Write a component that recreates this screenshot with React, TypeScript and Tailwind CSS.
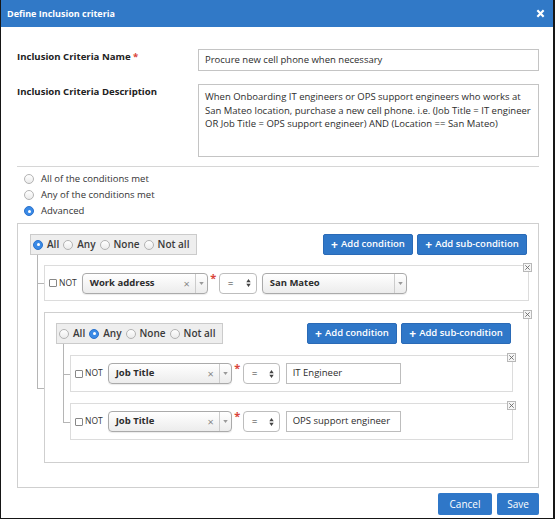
import React from 'react';

const Radio: React.FC<{ checked?: boolean }> = ({ checked }) =>
    checked ? (
        <span className="flex h-[10px] w-[10px] shrink-0 items-center justify-center rounded-full border border-[#2b72cc] bg-[#3a8ae6]">
            <span className="h-[3px] w-[3px] rounded-full bg-white" />
        </span>
    ) : (
        <span className="h-[10px] w-[10px] shrink-0 rounded-full border border-[#b3b3b3] bg-gradient-to-b from-white to-[#ebebeb]" />
    );

const CloseBox: React.FC = () => (
    <span className="absolute -right-[4px] -top-[3px] flex h-[9px] w-[9px] items-center justify-center border border-[#b8b8b8] bg-[#f6f6f6]">
        <svg viewBox="0 0 8 8" className="h-[7px] w-[7px]">
            <path d="M1.5 1.5l5 5M6.5 1.5l-5 5" stroke="#666" strokeWidth="1" />
        </svg>
    </span>
);

const Caret: React.FC = () => (
    <svg viewBox="0 0 6 4" className="h-[3px] w-[5px]">
        <path d="M0 0h6L3 4z" fill="#999" />
    </svg>
);

const ChosenSelect: React.FC<{ label: string; clear?: boolean; className: string }> = ({ label, clear, className }) => (
    <div className={`flex h-[21px] shrink-0 items-center rounded-[4px] border border-[#aaa] bg-gradient-to-b from-white to-[#ececec] shadow-[0_1px_1px_rgba(0,0,0,0.08)] ${className}`}>
        <span className="flex-1 truncate pl-[7px] text-[9.5px] font-bold text-[#2d2d2d]">{label}</span>
        {clear && <span className="mr-[5px] text-[11px] leading-none text-[#888]">×</span>}
        <span className="flex h-full w-[12px] items-center justify-center border-l border-[#ccc]">
            <Caret />
        </span>
    </div>
);

const EqSelect: React.FC<{ className: string }> = ({ className }) => (
    <div className={`flex h-[21px] shrink-0 items-center justify-between rounded-[4px] border border-[#bdbdbd] bg-white pl-[8px] pr-[5px] ${className}`}>
        <span className="text-[10px] text-[#333]">=</span>
        <svg viewBox="0 0 5 9" className="h-[8px] w-[5px]">
            <path d="M0 3.6h5L2.5 0zM0 5.4h5L2.5 9z" fill="#444" />
        </svg>
    </div>
);

const Asterisk: React.FC = () => (
    <span className="flex w-[11px] shrink-0 justify-center self-start pt-[6px] text-[11px] font-bold leading-none text-[#d9443a]">*</span>
);

const NotBox: React.FC = () => (
    <div className="flex shrink-0 items-center">
        <span className="h-[8px] w-[8px] rounded-[1px] border border-[#888] bg-white" />
        <span className="ml-[2px] text-[8.5px] text-[#333]">NOT</span>
    </div>
);

interface RuleRowProps {
    field: string;
    value: React.ReactNode;
    selectWidth: string;
    eqWidth: string;
    height: string;
}

const RuleRow: React.FC<RuleRowProps> = ({ field, value, selectWidth, eqWidth, height }) => (
    <div className={`relative flex items-center border border-[#dcdcdc] bg-white pl-[4px] ${height}`}>
        <CloseBox />
        <NotBox />
        <ChosenSelect label={field} clear className={`ml-[5px] ${selectWidth}`} />
        <Asterisk />
        <EqSelect className={eqWidth} />
        {value}
    </div>
);

const AddButton: React.FC<{ label: string; className: string }> = ({ label, className }) => (
    <button className={`flex h-[21px] items-center justify-center gap-[3px] rounded-[2px] border border-[#2a6ab6] bg-[#2f77c8] text-[9.5px] font-semibold text-white ${className}`}>
        <span className="text-[12px] font-bold leading-none">+</span>
        {label}
    </button>
);

const GroupHeader: React.FC<{ active: string }> = ({ active }) => (
    <div className="flex items-start justify-between">
        <div className="flex h-[21px] w-[167px] items-center gap-[4px] border border-[#cbcbcb] bg-[#eeeeee] pl-[2px] text-[10px] font-semibold text-[#3a3a3a]">
            {['All', 'Any', 'None', 'Not all'].map((opt) => (
                <React.Fragment key={opt}>
                    <Radio checked={opt === active} />
                    <span>{opt}</span>
                </React.Fragment>
            ))}
        </div>
        <div className="mr-[2px] flex gap-[4px]">
            <AddButton label="Add condition" className="w-[90px]" />
            <AddButton label="Add sub-condition" className="w-[110px]" />
        </div>
    </div>
);

// tree connector lines, one set per child
const TreeItem: React.FC<{ gap: 10 | 11; last?: boolean; children: React.ReactNode }> = ({ gap, last, children }) => {
    const wrap = gap === 10 ? 'relative mt-[10px]' : 'relative mt-[11px]';
    const vert =
        gap === 10
            ? last
                ? '-top-[10px] h-[calc(50%+10px)]'
                : '-top-[10px] h-[calc(100%+10px)]'
            : last
              ? '-top-[11px] h-[calc(50%+11px)]'
              : '-top-[11px] h-[calc(100%+11px)]';
    return (
        <div className={wrap}>
            <span className={`absolute -left-[7px] border-l border-[#b5b5b5] ${vert}`} />
            <span className="absolute -left-[7px] top-1/2 w-[7px] border-t border-[#b5b5b5]" />
            {children}
        </div>
    );
};

const TextValue: React.FC<{ text: string }> = ({ text }) => (
    <div className="ml-[6px] flex h-[21px] w-[115px] items-center border border-[#bdbdbd] bg-white pl-[6px] text-[9.5px] text-[#2d2d2d]">
        {text}
    </div>
);

const App: React.FC = () => {
    return (
        <div className="flex h-[519px] w-[555px] flex-col overflow-hidden border-b border-l border-r-2 border-[#161616] bg-white font-['Open_Sans',sans-serif] text-[#333]">
            <header className="flex h-[27px] shrink-0 items-center justify-between bg-[#3179c7] pl-[6px] pr-[8px]">
                <span className="text-[9px] font-bold text-white">Define Inclusion criteria</span>
                <svg viewBox="0 0 10 10" className="h-[9px] w-[9px]">
                    <path d="M1.5 1.5l7 7M8.5 1.5l-7 7" stroke="white" strokeWidth="2.4" />
                </svg>
            </header>

            <div className="flex flex-1 flex-col pl-[16px] pr-[14px] pt-[22px]">
                <div className="flex">
                    <label className="w-[181px] shrink-0 pt-[1px] text-[9.6px] font-bold text-[#222]">
                        Inclusion Criteria Name <span className="text-[#d9443a]">*</span>
                    </label>
                    <div className="flex h-[22px] flex-1 items-center border border-[#c4c4c4] pl-[6px] text-[9.5px] text-[#2d2d2d]">
                        Procure new cell phone when necessary
                    </div>
                </div>

                <div className="mt-[13px] flex">
                    <label className="w-[181px] shrink-0 pt-[1px] text-[9.6px] font-bold text-[#222]">
                        Inclusion Criteria Description
                    </label>
                    <div className="h-[73px] flex-1 border border-[#c4c4c4] px-[6px] pt-[5px] text-[9.5px] leading-[13.5px] text-[#2d2d2d]">
                        When Onboarding IT engineers or OPS support engineers who works at San Mateo location, purchase a new cell phone. i.e. (Job Title = IT engineer OR Job Title = OPS support engineer) AND (Location == San Mateo)
                    </div>
                </div>

                <div className="mt-[9px] border-t border-[#d6d6d6]" />

                <div className="mt-[4px] flex flex-col text-[9.5px] text-[#333]">
                    {[
                        ['All of the conditions met', false],
                        ['Any of the conditions met', false],
                        ['Advanced', true],
                    ].map(([label, checked]) => (
                        <div key={label as string} className="flex h-[16px] items-center gap-[7px] pl-[7px]">
                            <Radio checked={checked as boolean} />
                            <span>{label}</span>
                        </div>
                    ))}
                </div>

                <div className="mt-[4px] border border-[#cfcfcf] pb-[24px] pl-[12px] pr-[9px] pt-[10px]">
                    <GroupHeader active="All" />
                    <div className="pl-[14px]">
                        <TreeItem gap={10}>
                            <RuleRow
                                field="Work address"
                                selectWidth="w-[126px]"
                                eqWidth="w-[38px]"
                                height="h-[36px]"
                                value={<ChosenSelect label="San Mateo" className="ml-[5px] w-[145px]" />}
                            />
                        </TreeItem>
                        <TreeItem gap={11} last>
                            <div className="relative border border-[#cfcfcf] pb-[22px] pl-[11px] pr-[15px] pt-[10px]">
                                <CloseBox />
                                <GroupHeader active="Any" />
                                <div className="pl-[14px]">
                                    <TreeItem gap={11}>
                                        <RuleRow
                                            field="Job Title"
                                            selectWidth="w-[124px]"
                                            eqWidth="w-[37px]"
                                            height="h-[37px]"
                                            value={<TextValue text="IT Engineer" />}
                                        />
                                    </TreeItem>
                                    <TreeItem gap={11} last>
                                        <RuleRow
                                            field="Job Title"
                                            selectWidth="w-[124px]"
                                            eqWidth="w-[37px]"
                                            height="h-[37px]"
                                            value={<TextValue text="OPS support engineer" />}
                                        />
                                    </TreeItem>
                                </div>
                            </div>
                        </TreeItem>
                    </div>
                </div>

                <div className="mt-[5px] flex justify-end gap-[5px]">
                    <button className="h-[22px] w-[54px] rounded-[2px] bg-[#2f77c8] text-[10px] text-white">Cancel</button>
                    <button className="h-[22px] w-[42px] rounded-[2px] bg-[#2f77c8] text-[10px] text-white">Save</button>
                </div>
            </div>
        </div>
    );
};

export default App;
